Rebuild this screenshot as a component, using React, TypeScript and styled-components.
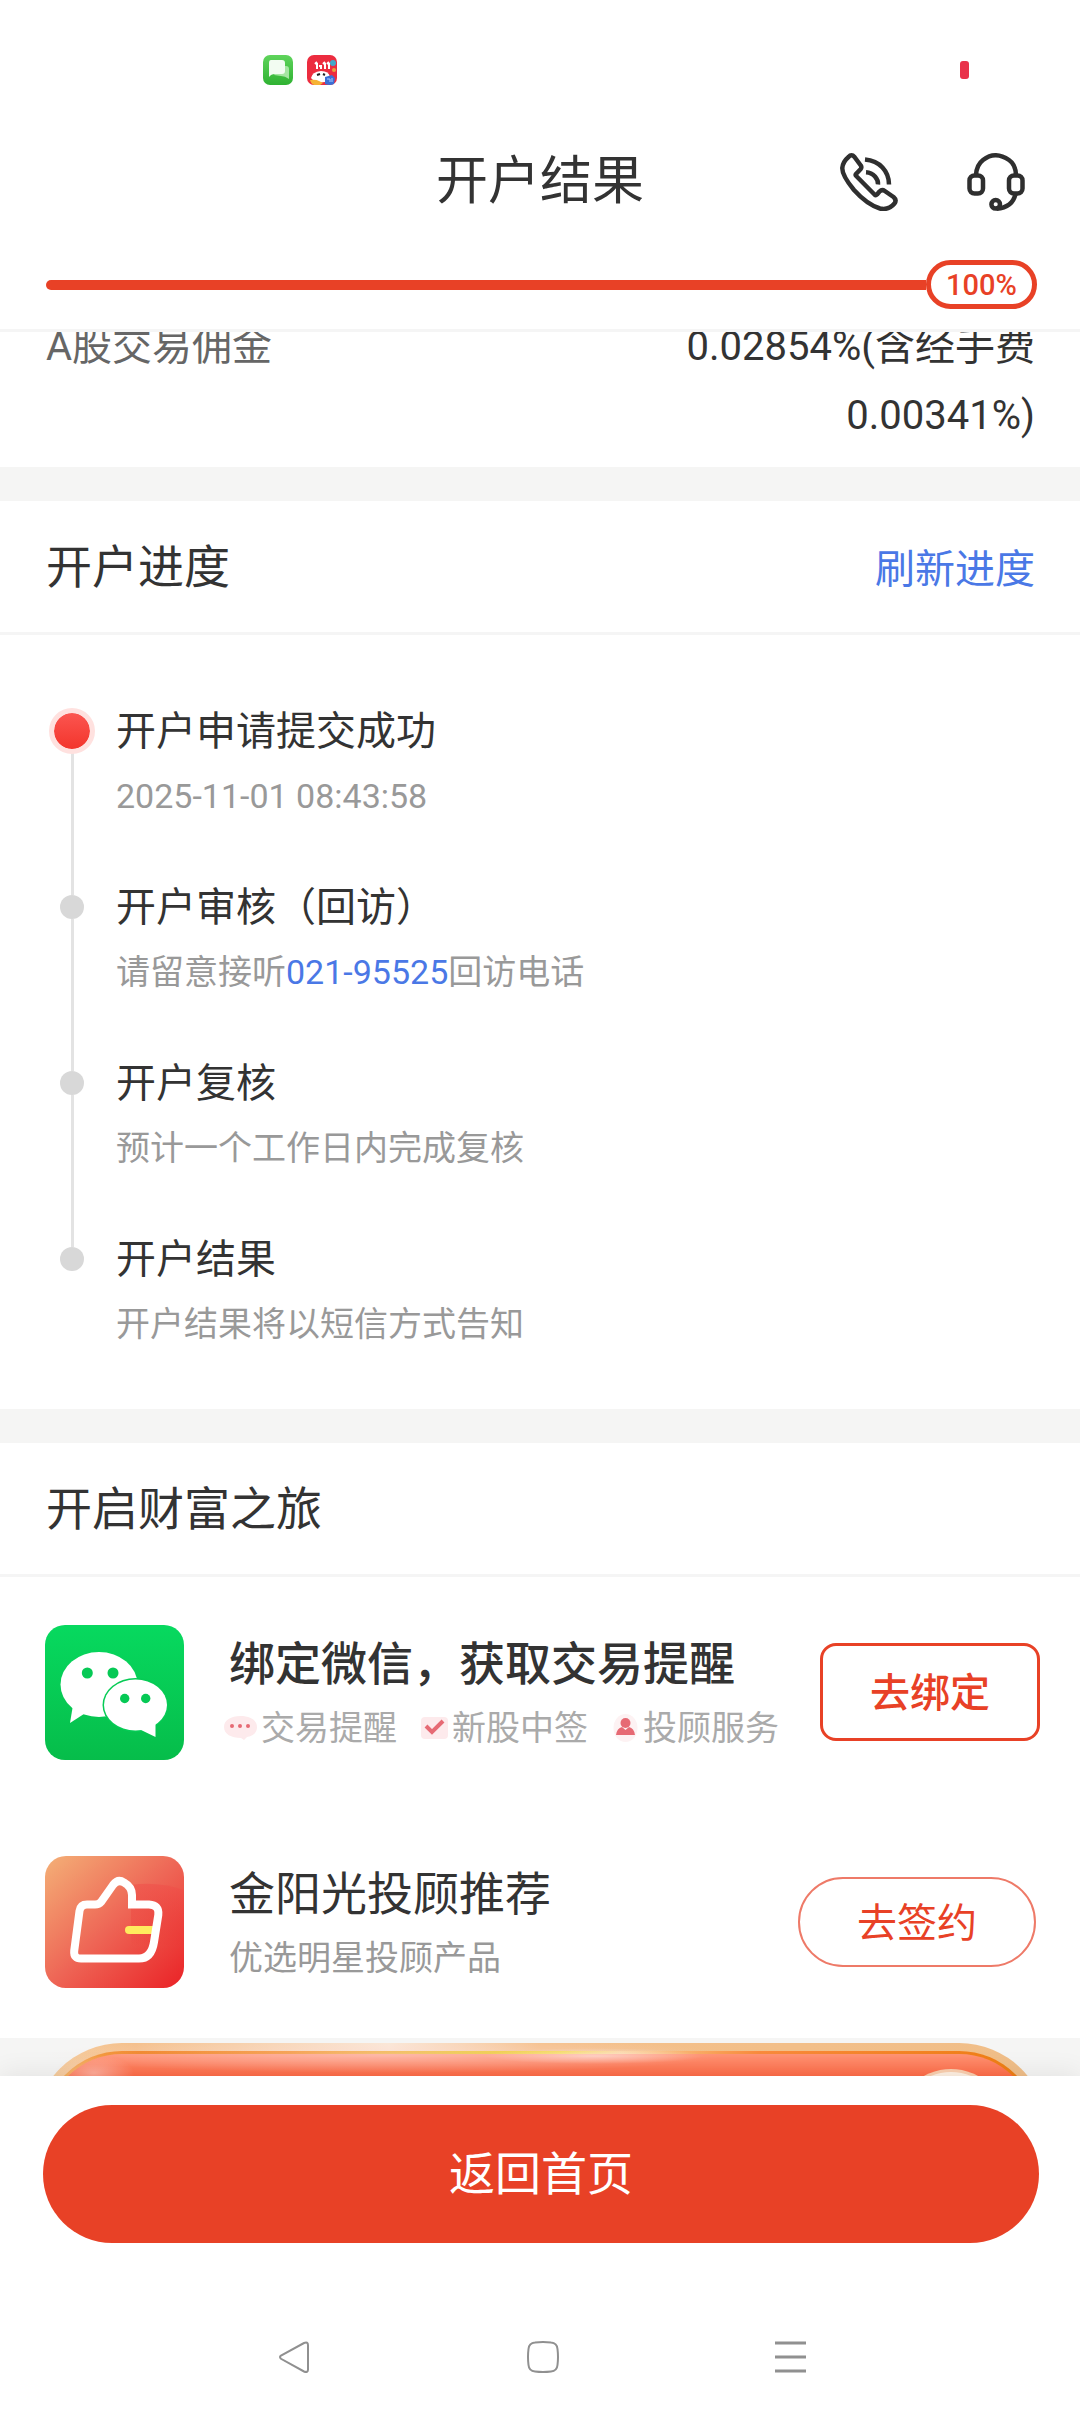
import React from "react";
import styled, { createGlobalStyle } from "styled-components";

const RED = "#e84126";
const BLUE = "#4a78e6";

const GlobalStyle = createGlobalStyle`
  *, *::before, *::after { box-sizing: border-box; }
  body {
    margin: 0;
    background: #fff;
    color: #333;
    font-family: Roboto, "Noto Sans CJK SC", sans-serif;
  }
  button {
    margin: 0;
    padding: 0;
    border: 0;
    background: none;
    color: inherit;
    font: inherit;
    cursor: pointer;
  }
  h1, h2, h3, p, ol, ul, dl, dd { margin: 0; padding: 0; font-weight: 400; }
  svg { display: block; flex: none; }
`;

const Screen = styled.div`
  display: flex;
  flex-direction: column;
  height: 100vh;
  overflow: hidden;
`;

const Header = styled.header`
  position: relative;
  z-index: 1;
  background: #fff;
  border-bottom: 3px solid #f5f5f5;
`;

const StatusBar = styled.div`
  display: flex;
  align-items: center;
  justify-content: space-between;
  height: 110px;
  padding: 30px 111px 0 263px;
`;

const StatusApps = styled.div`
  display: flex;
  gap: 14px;
`;

const Battery = styled.span`
  width: 9px;
  height: 18px;
  border-radius: 3px;
  background: #e9324a;
`;

const TitleBar = styled.div`
  display: grid;
  grid-template-columns: 1fr auto 1fr;
  align-items: center;
  height: 142px;
  padding: 2px 55px 0;
`;

const Title = styled.h1`
  grid-column: 2;
  font-size: 52px;
  line-height: 72px;
`;

const TitleActions = styled.div`
  display: flex;
  justify-content: flex-end;
  gap: 69px;
`;

const Progress = styled.div`
  display: flex;
  align-items: center;
  height: 77px;
  padding: 0 43px 12px 46px;
`;

const ProgressTrack = styled.div`
  flex: 1;
  height: 10px;
  border-radius: 5px 0 0 5px;
  background: ${RED};
`;

const ProgressLabel = styled.span`
  width: 111px;
  height: 49px;
  border: 5px solid ${RED};
  border-radius: 25px;
  color: ${RED};
  font-size: 29px;
  font-weight: 500;
  line-height: 40px;
  text-align: center;
`;

const Content = styled.main`
  flex: 1 1 0;
  min-height: 0;
  overflow: hidden;
  background: #f5f5f4;
`;

const FeeRow = styled.dl`
  display: flex;
  justify-content: space-between;
  margin-top: -20px;
  padding: 0 45px 17px 46px;
  background: #fff;
  font-size: 40px;
  line-height: 69px;
`;

const FeeName = styled.dt`
  color: #666;
`;

const FeeValue = styled.dd`
  width: 400px;
  text-align: right;
`;

const Panel = styled.section`
  margin-top: 34px;
  background: #fff;
`;

const PanelHead = styled.div`
  display: flex;
  align-items: baseline;
  justify-content: space-between;
  height: 134px;
  padding: 33px 45px 0 46px;
  border-bottom: 3px solid #f5f5f5;
`;

const PanelTitle = styled.h2`
  font-size: 46px;
  line-height: 66px;
`;

const RefreshButton = styled.button`
  color: ${BLUE};
  font-size: 40px;
  line-height: 60px;
`;

const Steps = styled.ol`
  padding: 66px 46px 0;
  list-style: none;
`;

const Step = styled.li`
  display: flex;
  gap: 18px;
  height: 176px;

  &:last-child { height: 180px; }
`;

const StepRail = styled.div`
  display: flex;
  flex-direction: column;
  align-items: center;
  width: 52px;
`;

const StepLine = styled.span<{ $visible: boolean; $grow?: boolean }>`
  width: 3px;
  height: 18px;
  flex: ${(p) => (p.$grow ? "1 0 0" : "none")};
  background: ${(p) => (p.$visible ? "#e3e3e3" : "transparent")};
`;

const StepDot = styled.span<{ $active: boolean }>`
  position: relative;
  flex: none;
  width: ${(p) => (p.$active ? 46 : 24)}px;
  height: ${(p) => (p.$active ? 46 : 24)}px;
  margin: ${(p) => (p.$active ? "-11px 0" : "0")};
  border: ${(p) => (p.$active ? "5px solid #ffe1df" : "0")};
  border-radius: 50%;
  background: ${(p) => (p.$active ? "linear-gradient(#fb5550, #f3352c) padding-box" : "#d8d8d8")};
`;

const StepText = styled.div`
  padding-top: 1px;
`;

const StepTitle = styled.h3`
  font-size: 40px;
  line-height: 60px;
`;

const StepNote = styled.p`
  padding-top: 8px;
  color: #999;
  font-size: 34px;
  line-height: 52px;
`;

const PhoneLink = styled.a`
  color: ${BLUE};
  text-decoration: none;
`;

const Offers = styled.ul`
  padding-bottom: 1px;
  list-style: none;
`;

const Offer = styled.li`
  display: flex;
  align-items: center;
  height: 230px;
  padding: 0 40px 0 45px;
`;

const OfferText = styled.div`
  flex: 1;
  margin-left: 45px;
  padding-top: 8px;
`;

const OfferTitle = styled.h3<{ $strong?: boolean }>`
  font-size: 46px;
  font-weight: ${(p) => (p.$strong ? 500 : 400)};
  line-height: 64px;
`;

const OfferNote = styled.p`
  color: #999;
  font-size: 34px;
  line-height: 64px;
`;

const Tags = styled.div`
  display: flex;
  gap: 24px;
  margin-left: -5px;
`;

const Tag = styled.span`
  display: flex;
  align-items: center;
  gap: 4px;
  color: #aaa;
  font-size: 34px;
  line-height: 64px;
  white-space: nowrap;
`;

const OfferButton = styled.button<{ $pill?: boolean }>`
  width: ${(p) => (p.$pill ? 238 : 220)}px;
  height: ${(p) => (p.$pill ? 90 : 98)}px;
  margin-right: ${(p) => (p.$pill ? 4 : 0)}px;
  padding-top: 3px;
  border: ${(p) => (p.$pill ? "2px solid #ee7a68" : `3px solid ${RED}`)};
  border-radius: ${(p) => (p.$pill ? 45 : 16)}px;
  color: ${RED};
  font-size: 40px;
  font-weight: ${(p) => (p.$pill ? 400 : 500)};
  line-height: 60px;
`;

const Banner = styled.div`
  padding: 5px 33px 0 34px;

  svg { width: 100%; height: 240px; }
`;

const Footer = styled.footer`
  position: relative;
  padding: 29px 41px 62px 43px;
  background: #fff;
  box-shadow: 0 -4px 24px rgba(0, 0, 0, 0.07);
`;

const HomeButton = styled.button`
  width: 100%;
  height: 138px;
  border-radius: 69px;
  background: ${RED};
  color: #fff;
  font-size: 46px;
  line-height: 64px;
`;

const SystemNav = styled.nav`
  position: relative;
  display: flex;
  align-items: flex-start;
  justify-content: space-between;
  height: 107px;
  padding: 36px 273px 0 278px;
  background: #fff;
`;

function MessagesAppIcon() {
  return (
    <svg width="30" height="30" viewBox="0 0 30 30" aria-hidden="true">
      <defs>
        <linearGradient id="msg" x1="0" y1="0" x2="0" y2="1">
          <stop offset="0" stopColor="#5fd45c" />
          <stop offset="1" stopColor="#2fb232" />
        </linearGradient>
      </defs>
      <rect width="30" height="30" rx="7" fill="url(#msg)" />
      <path d="M17 11h6q3 0 3 3v10q-4-3-8-3l-7-1z" fill="#a5e6a2" />
      <path d="M8 5h11q3 0 3 3v8q0 3-3 3h-7q-4 0-6 3V8q0-3 2-3z" fill="#f2fcf1" />
    </svg>
  );
}

function SaleAppIcon() {
  return (
    <svg width="30" height="30" viewBox="0 0 30 30" aria-hidden="true">
      <rect width="30" height="30" rx="7" fill="#ec2c3f" />
      <circle cx="26" cy="8" r="3" fill="#42a7c9" />
      <circle cx="27" cy="15" r="2" fill="#e9a33b" />
      <path d="M4 23q1-6 10-7 8 0 9 6l-5 5-9 1z" fill="#fff" />
      <path d="M10 8v6M14 10v4M18 8v6M22 8v6M8 9l2-2M12 11h3M16 9l2-2M20 9l2-2" stroke="#fff" strokeWidth="2" />
      <path d="M10 20l3-1M16 19l2 1" stroke="#222" strokeWidth="2" />
      <path d="M3 25q6-1 9 1l4 2-3 2H7q-3-1-4-5z" fill="#f6b335" />
      <path d="M18 22l7-2 3 3-1 6q-4 2-9 0z" fill="#3b6fd6" />
      <path d="M20 24h3v3M25 23v4" stroke="#a9ccff" fill="none" />
    </svg>
  );
}

function CallIcon() {
  return (
    <svg width="58" height="58" viewBox="0 0 58 58" fill="none" stroke="#2f2f2f" strokeWidth="4.5" strokeLinejoin="round" aria-hidden="true">
      <path d="M8.5 4Q11.500 .6 14.500 4L20.800 12.500Q22 14.500 20.500 16.200L16 21Q15.200 22 16.200 23L34.500 41.500Q35.800 42.700 37 41.500L39.500 38.500Q42 36 44.800 38L53.500 44Q57 47 54.500 50.500Q48.500 57.500 40 55.500Q27 51.500 14 37Q2 22.500 2.300 15Q2.800 8.800 8.500 4Z" />
      <path d="M25 6.500Q36 7.500 42.500 14.500T49 31.500M26 19.200Q31.500 19.500 35 23.500T38 31.500" />
    </svg>
  );
}

function HeadsetIcon() {
  return (
    <svg width="58" height="58" viewBox="0 0 58 58" fill="none" stroke="#2f2f2f" strokeWidth="4.5" aria-hidden="true">
      <path d="M9 22Q9.500 12 16 7T29 2.300T42 7T49 22" />
      <rect x="2.500" y="22.500" width="13.500" height="18" rx="5" />
      <rect x="42" y="22.500" width="13.500" height="18" rx="5" />
      <circle cx="28.700" cy="51.300" r="4.300" />
      <path d="M48.500 41Q45.500 54.500 29.500 55.700" />
    </svg>
  );
}

function WechatIcon() {
  return (
    <svg width="139" height="135" viewBox="0 0 139 135" aria-hidden="true">
      <defs>
        <linearGradient id="wx" x1="0" y1="0" x2="0" y2="1">
          <stop offset="0" stopColor="#07d95f" />
          <stop offset="1" stopColor="#06bd4a" />
        </linearGradient>
      </defs>
      <rect width="139" height="135" rx="20" fill="url(#wx)" />
      <ellipse cx="54" cy="59.500" rx="38.500" ry="32.500" fill="#fff" />
      <path d="M28 80L25 98L42 87Z" fill="#fff" />
      <ellipse cx="90.500" cy="80" rx="33" ry="27" fill="#06cb55" />
      <ellipse cx="90.500" cy="80" rx="31.500" ry="25.500" fill="#fff" />
      <path d="M94 104L110.500 112V97Z" fill="#fff" />
      <g fill="#06c955">
        <circle cx="42.300" cy="48" r="5.500" />
        <circle cx="68" cy="48" r="5.500" />
        <circle cx="79.700" cy="73.500" r="4.700" />
        <circle cx="100.700" cy="73.500" r="4.700" />
      </g>
    </svg>
  );
}

function AdvisorIcon() {
  return (
    <svg width="139" height="132" viewBox="0 0 139 132" fill="none" aria-hidden="true">
      <defs>
        <linearGradient id="adv" x1="0" y1="0" x2="1" y2="1">
          <stop offset="0" stopColor="#f4b077" />
          <stop offset=".5" stopColor="#ee6656" />
          <stop offset="1" stopColor="#ea2226" />
        </linearGradient>
        <linearGradient id="advArc" x1="0" y1="0" x2="0" y2="1">
          <stop offset="0" stopColor="#f0504a" stopOpacity=".6" />
          <stop offset=".6" stopColor="#ea2226" stopOpacity="0" />
        </linearGradient>
      </defs>
      <rect width="139" height="132" rx="21" fill="url(#adv)" />
      <path d="M86 29Q112 25 139 34V111Q139 132 118 132H86Z" fill="url(#advArc)" />
      <path d="M84 74H108" stroke="#ffec5e" strokeWidth="8" strokeLinecap="round" />
      <path
        d="M42 48.500H50Q54 48.500 56 46L68 29Q73 22.500 79 26.500Q87 31 87 39V48.500H104Q114.500 49 113.300 59L109 86Q106.500 102.500 94 102.500H36Q28.500 102.500 29.200 95L34.500 55Q35.500 48.500 42 48.500Z"
        stroke="#fff"
        strokeWidth="8"
      />
    </svg>
  );
}

function BubbleTagIcon() {
  return (
    <svg width="33" height="26" viewBox="0 0 33 26" aria-hidden="true">
      <path d="M16.500 1C26 1 33 5 33 12Q33 20 23 22L20 25L17 23C7 23 0 19 0 12S7 1 16.500 1Z" fill="#fdeaec" />
      <g fill="#e66a74">
        <circle cx="8" cy="11" r="2" />
        <circle cx="16" cy="11" r="2" />
        <circle cx="24" cy="11" r="2" />
      </g>
    </svg>
  );
}

function CheckTagIcon() {
  return (
    <svg width="27" height="22" viewBox="0 0 27 22" fill="none" aria-hidden="true">
      <rect width="27" height="22" rx="4" fill="#fdeaec" />
      <path d="M5 9L11 15L22 4" stroke="#e66a74" strokeWidth="4" />
    </svg>
  );
}

function PersonTagIcon() {
  return (
    <svg width="27" height="30" viewBox="0 0 27 30" aria-hidden="true">
      <ellipse cx="13.500" cy="15" rx="12" ry="14" fill="#fdf2f3" />
      <circle cx="13.500" cy="10" r="5" fill="#e66a74" />
      <path d="M4 22Q5 15 10 14L13.500 17L17 14Q22 15 23 22Z" fill="#e66a74" />
    </svg>
  );
}

function BannerArt() {
  return (
    <svg viewBox="0 0 1013 240" preserveAspectRatio="none" aria-hidden="true">
      <defs>
        <linearGradient id="rim">
          <stop offset="0" stopColor="#f6cf9f" />
          <stop offset=".1" stopColor="#f4c08c" />
          <stop offset=".2" stopColor="#f5cfa6" />
          <stop offset=".35" stopColor="#f9ead8" />
          <stop offset=".5" stopColor="#f4c08a" />
          <stop offset="1" stopColor="#f0be88" />
        </linearGradient>
        <linearGradient id="edge">
          <stop offset="0" stopColor="#f7b254" />
          <stop offset=".1" stopColor="#ef7d18" />
          <stop offset=".25" stopColor="#f1840f" />
          <stop offset=".42" stopColor="#e6c410" />
          <stop offset=".52" stopColor="#f0d520" />
          <stop offset=".58" stopColor="#f9cf8e" />
          <stop offset=".72" stopColor="#f98a3c" />
          <stop offset="1" stopColor="#ee7d10" />
        </linearGradient>
        <linearGradient id="fill" x1="0" y1="0" x2="0" y2="1">
          <stop offset="0" stopColor="#ff9474" />
          <stop offset=".1" stopColor="#ff6c48" />
          <stop offset="1" stopColor="#ff5a33" />
        </linearGradient>
        <radialGradient id="glow">
          <stop offset="0" stopColor="#fff" stopOpacity=".55" />
          <stop offset="1" stopColor="#fff" stopOpacity="0" />
        </radialGradient>
        <radialGradient id="softGlow">
          <stop offset="0" stopColor="#ffd9d4" stopOpacity=".55" />
          <stop offset="1" stopColor="#ffd9d4" stopOpacity="0" />
        </radialGradient>
      </defs>
      <rect width="1013" height="240" rx="88" fill="url(#rim)" />
      <rect x="8" y="8" width="997" height="224" rx="80" fill="url(#edge)" />
      <rect x="11" y="11" width="991" height="218" rx="77" fill="url(#fill)" />
      <ellipse cx="560" cy="13" rx="110" ry="8" fill="url(#glow)" />
      <ellipse cx="350" cy="12" rx="340" ry="18" fill="url(#softGlow)" />
      <ellipse cx="60" cy="30" rx="40" ry="18" fill="url(#softGlow)" />
      <circle cx="917" cy="82" r="56" fill="#fbd0b0" />
      <circle cx="917" cy="82" r="53" fill="#fff1e2" />
    </svg>
  );
}

const steps = [
  { title: "开户申请提交成功", note: "2025-11-01 08:43:58" },
  {
    title: "开户审核（回访）",
    note: (
      <>
        请留意接听<PhoneLink href="tel:021-95525">021-95525</PhoneLink>回访电话
      </>
    ),
  },
  { title: "开户复核", note: "预计一个工作日内完成复核" },
  { title: "开户结果", note: "开户结果将以短信方式告知" },
];

export default function App() {
  return (
    <Screen>
      <GlobalStyle />
      <Header>
        <StatusBar>
          <StatusApps>
            <MessagesAppIcon />
            <SaleAppIcon />
          </StatusApps>
          <Battery />
        </StatusBar>
        <TitleBar>
          <Title>开户结果</Title>
          <TitleActions>
            <button type="button" aria-label="电话">
              <CallIcon />
            </button>
            <button type="button" aria-label="客服">
              <HeadsetIcon />
            </button>
          </TitleActions>
        </TitleBar>
        <Progress>
          <ProgressTrack />
          <ProgressLabel>100%</ProgressLabel>
        </Progress>
      </Header>

      <Content>
        <FeeRow>
          <FeeName>A股交易佣金</FeeName>
          <FeeValue>0.02854%(含经手费0.00341%)</FeeValue>
        </FeeRow>

        <Panel>
          <PanelHead>
            <PanelTitle>开户进度</PanelTitle>
            <RefreshButton type="button">刷新进度</RefreshButton>
          </PanelHead>
          <Steps>
            {steps.map((step, i) => (
              <Step key={step.title}>
                <StepRail>
                  <StepLine $visible={i > 0} />
                  <StepDot $active={i === 0} />
                  <StepLine $visible={i < steps.length - 1} $grow />
                </StepRail>
                <StepText>
                  <StepTitle>{step.title}</StepTitle>
                  <StepNote>{step.note}</StepNote>
                </StepText>
              </Step>
            ))}
          </Steps>
        </Panel>

        <Panel>
          <PanelHead>
            <PanelTitle>开启财富之旅</PanelTitle>
          </PanelHead>
          <Offers>
            <Offer>
              <WechatIcon />
              <OfferText>
                <OfferTitle $strong>绑定微信，获取交易提醒</OfferTitle>
                <Tags>
                  <Tag>
                    <BubbleTagIcon />
                    交易提醒
                  </Tag>
                  <Tag>
                    <CheckTagIcon />
                    新股中签
                  </Tag>
                  <Tag>
                    <PersonTagIcon />
                    投顾服务
                  </Tag>
                </Tags>
              </OfferText>
              <OfferButton type="button">去绑定</OfferButton>
            </Offer>
            <Offer>
              <AdvisorIcon />
              <OfferText>
                <OfferTitle>金阳光投顾推荐</OfferTitle>
                <OfferNote>优选明星投顾产品</OfferNote>
              </OfferText>
              <OfferButton type="button" $pill>
                去签约
              </OfferButton>
            </Offer>
          </Offers>
        </Panel>

        <Banner>
          <BannerArt />
        </Banner>
      </Content>

      <Footer>
        <HomeButton type="button">返回首页</HomeButton>
      </Footer>

      <SystemNav>
        <button type="button" aria-label="返回">
          <svg width="32" height="32" viewBox="0 0 32 32" fill="none" stroke="#909090" strokeWidth="2">
            <path d="M3 14.500Q1 16 3 17.800L26 30.500Q30 32 30 28.500V4Q30 .5 26 2Z" />
          </svg>
        </button>
        <button type="button" aria-label="主屏幕">
          <svg width="32" height="32" viewBox="0 0 32 32" fill="none" stroke="#909090" strokeWidth="2">
            <path d="M8 1.500Q16 .5 24 1.500Q30 2 30.500 8Q31.500 16 30.500 24Q30 30 24 30.500Q16 31.500 8 30.500Q2 30 1.500 24Q.5 16 1.500 8Q2 2 8 1.500Z" />
          </svg>
        </button>
        <button type="button" aria-label="最近任务">
          <svg width="32" height="32" viewBox="0 0 32 32" stroke="#909090" strokeWidth="3">
            <path d="M0 2H31M0 16H31M0 30H31" />
          </svg>
        </button>
      </SystemNav>
    </Screen>
  );
}
